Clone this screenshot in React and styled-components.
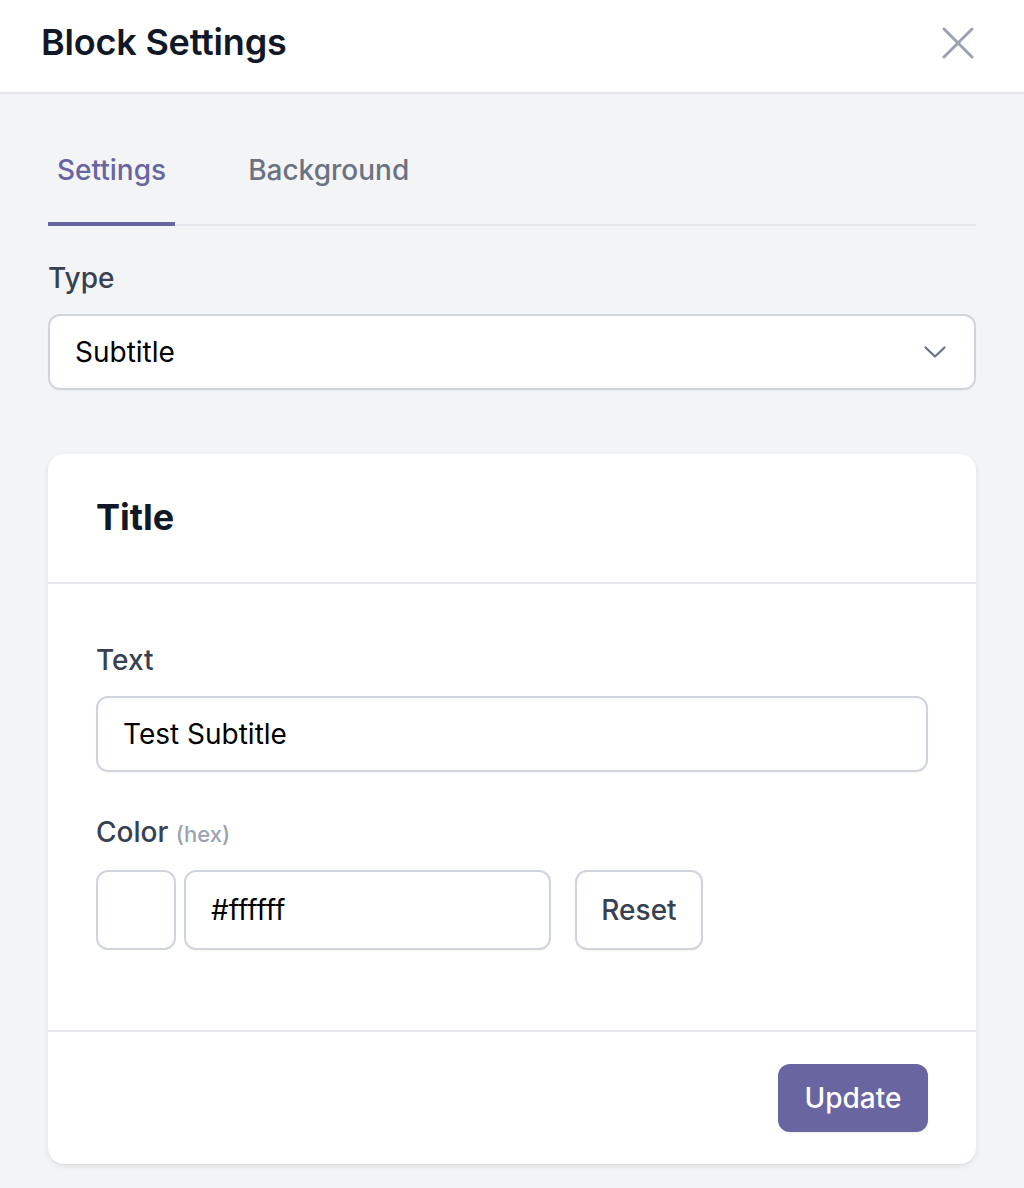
import styled, { createGlobalStyle } from "styled-components";

const GlobalStyle = createGlobalStyle`
  html, body {
    margin: 0;
    padding: 0;
    background: #f3f4f6;
    font-family: Inter, "Noto Sans", sans-serif;
  }
  * { box-sizing: border-box; }
`;

export default function App() {
  return (
    <>
      <GlobalStyle />
      <Panel>
        <Header>
          <HeaderTitle>Block Settings</HeaderTitle>
          <CloseButton aria-label="Close">
            <svg width="32" height="32" viewBox="0 0 32 32" fill="none">
              <path
                d="M2 2L30 30M30 2L2 30"
                stroke="#9ca3af"
                strokeWidth="3"
                strokeLinecap="round"
              />
            </svg>
          </CloseButton>
        </Header>

        <Body>
          <TabList>
            <Tab $active>Settings</Tab>
            <Tab>Background</Tab>
          </TabList>

          <Field>
            <Label>Type</Label>
            <SelectBox>
              <span>Subtitle</span>
              <svg width="22" height="12" viewBox="0 0 22 12" fill="none">
                <path
                  d="M1.5 1.5L11 10.5L20.5 1.5"
                  stroke="#6b7280"
                  strokeWidth="2.2"
                  strokeLinecap="round"
                  strokeLinejoin="round"
                />
              </svg>
            </SelectBox>
          </Field>

          <Card>
            <CardHeader>
              <CardTitle>Title</CardTitle>
            </CardHeader>
            <CardContent>
              <Field>
                <Label>Text</Label>
                <Input>Test Subtitle</Input>
              </Field>
              <Field $gap={40}>
                <Label>
                  Color <Hint>(hex)</Hint>
                </Label>
                <ColorRow>
                  <Swatch $color="#ffffff" />
                  <HexInput>#ffffff</HexInput>
                  <GhostButton>Reset</GhostButton>
                </ColorRow>
              </Field>
            </CardContent>
            <CardFooter>
              <PrimaryButton>Update</PrimaryButton>
            </CardFooter>
          </Card>
        </Body>
      </Panel>
    </>
  );
}

const Panel = styled.div`
  min-height: 100vh;
  background: #f3f4f6;
`;

const Header = styled.header`
  height: 94px;
  background: #ffffff;
  border-bottom: 2px solid #e5e7eb;
  display: flex;
  align-items: center;
  justify-content: space-between;
  padding: 0 48px 8px 41px;
`;

const HeaderTitle = styled.h1`
  margin: 0;
  font-size: 36px;
  font-weight: 600;
  color: #111827;
  letter-spacing: -0.2px;
`;

const CloseButton = styled.button`
  border: 0;
  background: none;
  padding: 0;
  display: flex;
  cursor: pointer;
  transform: translate(-2px, 1px);
`;

const Body = styled.main`
  padding: 24px 48px 24px;
`;

const TabList = styled.nav`
  display: flex;
  gap: 64px;
  border-bottom: 2px solid #e5e7eb;
  margin-bottom: 32px;
`;

const Tab = styled.button`
  border: 0;
  background: none;
  font-family: inherit;
  font-size: 28px;
  font-weight: 500;
  line-height: 40px;
  padding: 32px 9px;
  margin-bottom: -2px;
  border-bottom: 4px solid ${({ $active }) => ($active ? "#6865a0" : "transparent")};
  color: ${({ $active }) => ($active ? "#6865a0" : "#6b7280")};
  cursor: pointer;
`;

const Field = styled.div`
  display: flex;
  flex-direction: column;
  gap: 16px;
  margin-top: ${({ $gap }) => ($gap ? `${$gap}px` : "0")};
`;

const Label = styled.label`
  font-size: 28px;
  font-weight: 500;
  line-height: 40px;
  color: #374151;
`;

const Hint = styled.span`
  font-size: 22px;
  color: #9ca3af;
`;

const SelectBox = styled.div`
  height: 76px;
  background: #ffffff;
  border: 2px solid #d1d5db;
  border-radius: 12px;
  display: flex;
  align-items: center;
  justify-content: space-between;
  padding: 0 28px 0 25px;
  font-size: 28px;
  color: #000000;
  box-shadow: 0 1px 2px rgba(0, 0, 0, 0.04);
`;

const Card = styled.section`
  margin-top: 64px;
  background: #ffffff;
  border-radius: 16px;
  box-shadow: 0 2px 6px rgba(0, 0, 0, 0.08), 0 1px 2px rgba(0, 0, 0, 0.04);
  overflow: hidden;
`;

const CardHeader = styled.div`
  height: 130px;
  display: flex;
  align-items: center;
  padding: 0 48px 2px;
  border-bottom: 2px solid #e5e7eb;
`;

const CardTitle = styled.h2`
  margin: 0;
  font-size: 36px;
  font-weight: 700;
  color: #111827;
`;

const CardContent = styled.div`
  padding: 56px 48px 80px;
`;

const Input = styled.div`
  height: 76px;
  border: 2px solid #d1d5db;
  border-radius: 12px;
  display: flex;
  align-items: center;
  padding: 0 25px;
  font-size: 28px;
  color: #000000;
  box-shadow: 0 1px 2px rgba(0, 0, 0, 0.04);
`;

const ColorRow = styled.div`
  display: flex;
  align-items: center;
  gap: 8px;
`;

const Swatch = styled.div`
  width: 80px;
  height: 80px;
  border: 2px solid #d1d5db;
  border-radius: 12px;
  background: ${({ $color }) => $color};
`;

const HexInput = styled(Input)`
  width: 367px;
  height: 80px;
`;

const GhostButton = styled.button`
  margin-left: 16px;
  width: 128px;
  height: 80px;
  border: 2px solid #d1d5db;
  border-radius: 12px;
  background: #ffffff;
  font-family: inherit;
  font-size: 28px;
  font-weight: 500;
  color: #374151;
  box-shadow: 0 1px 2px rgba(0, 0, 0, 0.05);
`;

const CardFooter = styled.div`
  border-top: 2px solid #e5e7eb;
  padding: 32px 48px;
  display: flex;
  justify-content: flex-end;
`;

const PrimaryButton = styled.button`
  width: 150px;
  height: 68px;
  border: 0;
  border-radius: 12px;
  background: #6865a0;
  color: #ffffff;
  font-family: inherit;
  font-size: 28px;
  font-weight: 500;
  box-shadow: 0 1px 2px rgba(0, 0, 0, 0.08);
`;
